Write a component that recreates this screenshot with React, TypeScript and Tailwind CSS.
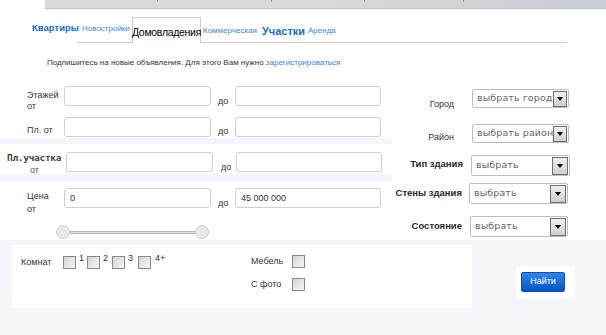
import React from 'react';

const sans = { fontFamily: '"Liberation Sans", Arial, sans-serif' };

const TextInput = ({ w, value }: { w: string; value?: string }) => (
  <div
    className={`${w} h-[20px] shrink-0 rounded-[3px] border border-[#cfcfcf] bg-white pl-[5px] text-[9px] leading-[18px] text-[#333]`}
  >
    {value}
  </div>
);

const Arrow = ({ big }: { big?: boolean }) => (
  <span
    className={`${big ? 'h-[18px] w-[16px]' : 'h-[16px] w-[14px]'} mr-px flex shrink-0 items-center justify-center border border-[#6f6f6f] bg-gradient-to-b from-[#f2f2f2] to-[#cfcfcf]`}
  >
    <span className="h-0 w-0 border-x-[3.5px] border-t-[4px] border-x-transparent border-t-black" />
  </span>
);

const Select = ({ text, w, big }: { text: string; w: string; big?: boolean }) => (
  <div
    className={`${w} ${big ? 'h-[21px]' : 'h-[19px]'} flex shrink-0 items-center rounded-[2px] border border-[#b8bccb] bg-white pl-[4px]`}
  >
    <span
      className="min-w-0 flex-1 overflow-hidden whitespace-nowrap text-[9.5px] tracking-[0.1px] text-[#666]"
      style={{ fontFamily: '"DejaVu Sans", Verdana, sans-serif' }}
    >
      {text}
    </span>
    <Arrow big={big} />
  </div>
);

const Check = () => (
  <span className="block h-[13px] w-[13px] shrink-0 border border-[#8a8a8a] bg-gradient-to-br from-[#d4d4d4] to-[#f6f6f6]" />
);

export default function App() {
  return (
    <div className="relative h-[335px] w-[606px] overflow-hidden bg-white text-[#333]" style={sans}>
      {/* top bar */}
      <div className="ml-[45px] flex h-[8px] bg-gradient-to-r from-[#d9d9d9] via-[#d9d9d9] to-[#c9cdd5] shadow-[0_1px_1px_#c4c4c4]">
        {[113, 114, 93, 99].map((w) => (
          <div key={w} className="flex justify-end" style={{ width: w }}>
            <span className="h-[2px] w-px bg-[#9a9a9a]" />
          </div>
        ))}
      </div>

      {/* tabs */}
      <div className="mt-[9px] flex h-[26px] items-end">
        <span className="ml-[32px] w-[45px] pb-[9px] text-[9.5px] font-bold leading-[12px] text-[#1b6cc8]">
          Квартиры
        </span>
        <div className="flex h-[26px] w-[490px] items-end border-b border-[#cccccc]">
          <span className="ml-[5px] w-[50px] pb-[8px] text-[8px] leading-[10px] text-[#4585d8]">Новостройки</span>
          <span className="-mb-px flex h-[26px] w-[69px] items-center justify-center border border-b-0 border-[#cccccc] bg-white pt-[4px] text-[10.5px] tracking-[-0.3px] text-black">
            Домовладения
          </span>
          <span className="ml-[2px] w-[59px] pb-[6px] text-[8px] leading-[10px] text-[#4585d8]">Коммерческая</span>
          <span className="w-[46px] pb-[5px] text-[11px] font-bold leading-[12px] text-[#1b6cc8]">Участки</span>
          <span className="pb-[6px] text-[8px] leading-[10px] text-[#4585d8]">Аренда</span>
        </div>
      </div>

      {/* notice */}
      <div className="ml-[47px] mt-[15px] text-[8px] leading-[10px] text-[#333]">
        Подпишитесь на новые объявления. Для этого Вам нужно{' '}
        <span className="text-[#3d7fd9]">зарегистрироваться</span>
      </div>

      {/* form */}
      <div className="mt-[18px] flex h-[154px]">
        <div className="w-[392px]">
          <div className="flex h-[20px]">
            <div className="w-[64px] shrink-0 pl-[27px] pt-[4px] text-[9px] leading-[11px]">
              Этажей
              <br />
              от
            </div>
            <TextInput w="w-[147px]" />
            <span className="w-[24px] shrink-0 pl-[7px] pt-[10px] text-[9px] leading-[10px]">до</span>
            <TextInput w="w-[146px]" />
          </div>

          <div className="mt-[11px] flex h-[20px]">
            <div className="w-[64px] shrink-0 pl-[27px] pt-[8px] text-[9px] leading-[11px]">Пл. от</div>
            <TextInput w="w-[147px]" />
            <span className="w-[24px] shrink-0 pl-[7px] pt-[9px] text-[9px] leading-[10px]">до</span>
            <TextInput w="w-[146px]" />
          </div>

          <div className="mt-px h-[6px] bg-[#f5f6f9]" />

          <div className="mt-[8px] flex h-[20px]">
            <div className="w-[66px] shrink-0 pl-[7px] text-center leading-[12px]">
              <div
                className="text-left text-[9.5px] font-bold tracking-[-0.3px] text-[#444]"
                style={{ fontFamily: '"DejaVu Sans Mono", monospace' }}
              >
                Пл.участка
              </div>
              <div className="w-[55px] text-[9px] leading-[13px] text-[#555]">от</div>
            </div>
            <TextInput w="w-[147px]" />
            <span className="w-[23px] shrink-0 pl-[8px] pt-[10px] text-[9px] leading-[10px]">до</span>
            <TextInput w="w-[146px]" />
          </div>

          <div className="mt-[2px] h-[8px] bg-[#f5f6f9]" />

          <div className="mt-[6px] flex h-[20px]">
            <div className="w-[64px] shrink-0 pl-[27px] pt-[2px] text-[9px] leading-[13px]">
              Цена
              <br />
              от
            </div>
            <TextInput w="w-[147px]" value="0" />
            <span className="w-[24px] shrink-0 pl-[7px] pt-[10px] text-[9px] leading-[10px]">до</span>
            <TextInput w="w-[146px]" value="45 000 000" />
          </div>

          {/* range slider */}
          <div className="ml-[56px] mt-[17px] flex h-[14px] w-[153px] items-center">
            <span className="h-[14px] w-[14px] shrink-0 rounded-full border border-[#cfcfcf] bg-[#e9e9e9]" />
            <span className="h-[3px] flex-1 border-y border-[#b5b5b5] bg-[#e4e4e4]" />
            <span className="h-[14px] w-[14px] shrink-0 rounded-full border border-[#cfcfcf] bg-[#e9e9e9]" />
          </div>
        </div>

        <div className="w-[198px] text-[9px]">
          <div className="mt-[3px] flex h-[19px] items-start">
            <span className="w-[62px] pt-[10px] text-right leading-[10px] text-[#333]">Город</span>
            <span className="w-[18px]" />
            <Select w="w-[97px]" text="выбрать город" />
          </div>
          <div className="mt-[16px] flex h-[19px] items-start">
            <span className="w-[62px] pt-[8px] text-right leading-[10px] text-[#333]">Район</span>
            <span className="w-[18px]" />
            <Select w="w-[97px]" text="выбрать район" />
          </div>
          <div className="mt-[12px] flex h-[21px] items-start">
            <span className="w-[71px] pt-[3px] text-right text-[9.5px] font-bold leading-[12px] text-[#2a2a2a]">
              Тип здания
            </span>
            <span className="w-[8px]" />
            <Select w="w-[99px]" text="выбрать" big />
          </div>
          <div className="mt-[7px] flex h-[21px] items-start">
            <span className="w-[70px] pt-[4px] text-right text-[9.5px] font-bold leading-[12px] text-[#2a2a2a]">
              Стены здания
            </span>
            <span className="w-[7px]" />
            <Select w="w-[99px]" text="выбрать" big />
          </div>
          <div className="mt-[12px] flex h-[21px] items-start">
            <span className="w-[70px] pt-[4px] text-right text-[9.5px] font-bold leading-[12px] text-[#2a2a2a]">
              Состояние
            </span>
            <span className="w-[8px]" />
            <Select w="w-[98px]" text="выбрать" big />
          </div>
        </div>
      </div>

      {/* bottom filters */}
      <div className="flex h-[95px] bg-[#f5f6f9]">
        <div className="ml-[12px] mt-[5px] flex h-[63px] w-[460px] bg-white pl-[9px] pt-[11px] text-[9px]">
          <div className="flex w-[230px] items-start">
            <span className="w-[42px] pt-px leading-[11px]">Комнат</span>
            <Check />
            <span className="-mt-[2px] w-[11px] pl-[3px] leading-[9px]">1</span>
            <Check />
            <span className="-mt-[2px] w-[12px] pl-[3px] leading-[9px]">2</span>
            <Check />
            <span className="-mt-[2px] w-[13px] pl-[3px] leading-[9px]">3</span>
            <Check />
            <span className="-mt-[2px] pl-[4px] leading-[9px]">4+</span>
          </div>
          <div className="-mt-px flex flex-col gap-[10px]">
            <div className="flex items-start">
              <span className="w-[41px] pt-px leading-[11px]">Мебель</span>
              <Check />
            </div>
            <div className="flex items-start">
              <span className="w-[41px] pt-px leading-[11px]">С фото</span>
              <Check />
            </div>
          </div>
        </div>
        <div className="flex-1" />
        <div className="mr-[31px] mt-[26px] flex h-[32px] w-[59px] items-center justify-start bg-white pl-[5px]">
          <span className="flex h-[20px] w-[44px] items-center justify-center rounded-[2px] border border-[#0a4fb8] bg-gradient-to-b from-[#2f86e6] to-[#0752c6] text-[9px] text-white">
            Найти
          </span>
        </div>
      </div>
    </div>
  );
}
